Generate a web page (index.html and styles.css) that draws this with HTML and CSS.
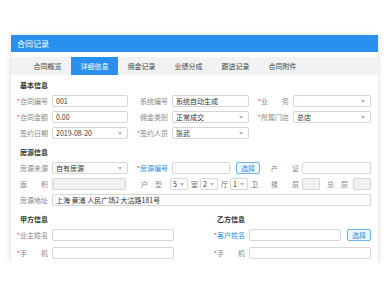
FILE: index.html
```html
<!DOCTYPE html>
<html lang="zh-CN">
<head>
  <meta charset="UTF-8" />
  <meta name="viewport" content="width=device-width, initial-scale=1.0"/>
  <title>合同记录</title>
  <link rel="stylesheet" href="styles.css">
</head>
<body>
  <div class="card">
    <div class="card-head">合同记录</div>

    <div class="tabs">
      <span class="tab">合同概览</span>
      <span class="tab active">详细信息</span>
      <span class="tab">佣金记录</span>
      <span class="tab">业绩分成</span>
      <span class="tab">跟进记录</span>
      <span class="tab">合同附件</span>
    </div>

    <div class="card-body">
      <div class="title first">基本信息</div>
      <div class="grid3">
        <div class="field"><label class="req">合同编号</label><div class="input">001</div></div>
        <div class="field"><label>系统编号</label><div class="input">系统自动生成</div></div>
        <div class="field"><label class="req">业&emsp;&emsp;务</label><div class="select"></div></div>

        <div class="field"><label class="req">合同金额</label><div class="input">0.00</div></div>
        <div class="field"><label>佣金类别</label><div class="select">正常成交</div></div>
        <div class="field"><label class="req">所属门店</label><div class="select">总店</div></div>

        <div class="field"><label>签约日期</label><div class="select">2019-08-20</div></div>
        <div class="field"><label class="req">签约人员</label><div class="select">张武</div></div>
      </div>

      <div class="title">房源信息</div>
      <div class="rows">
        <div class="row">
          <div class="field w1"><label>房源来源</label><div class="select">自有房源</div></div>
          <div class="field w2"><label class="req link">房源编号</label><div class="input"></div></div>
          <button class="btn">选择</button>
          <label class="lbl-side">产&emsp;&emsp;证</label>
          <div class="input grow"></div>
        </div>
        <div class="row">
          <div class="field w1"><label>面&emsp;&emsp;积</label><div class="input disabled"></div></div>
          <label class="lbl-hx">户&emsp;型</label>
          <div class="select mini">5</div><span class="unit">室</span>
          <div class="select mini">2</div><span class="unit">厅</span>
          <div class="select mini">1</div><span class="unit">卫</span>
          <label class="lbl-side">楼&emsp;&emsp;层</label>
          <div class="input disabled mini"></div>
          <label class="lbl-zc">总&emsp;层</label>
          <div class="input disabled mini"></div>
        </div>
        <div class="row">
          <div class="field full"><label>房源地址</label><div class="input">上海 黄浦 人民广场2 大沽路181号</div></div>
        </div>
      </div>

      <div class="grid2">
        <div class="col">
          <div class="title">甲方信息</div>
          <div class="rows loose">
            <div class="field"><label class="req">业主姓名</label><div class="input"></div></div>
            <div class="field"><label class="req">手&emsp;&emsp;机</label><div class="input"></div></div>
          </div>
        </div>
        <div class="col">
          <div class="title">乙方信息</div>
          <div class="rows loose">
            <div class="field"><label class="req link">客户姓名</label><div class="input"></div><button class="btn">选择</button></div>
            <div class="field"><label class="req">手&emsp;&emsp;机</label><div class="input"></div></div>
          </div>
        </div>
      </div>
    </div>
  </div>
</body>
</html>
```

FILE: styles.css
```css
body {
  margin: 0;
  background-color: #fff;
  font-family: "Noto Sans CJK SC", "Noto Sans", sans-serif;
  font-size: 7px;
  color: #333;
}

.card {
  width: 367px;
  margin: 35px 0 0 11px;
  background-color: #fff;
  box-shadow: 0 1px 6px rgba(0, 0, 0, 0.16);
  padding-bottom: 4px;
}

.card-head {
  height: 17px;
  line-height: 17px;
  padding-left: 6px;
  background-color: #2990f0;
  color: #fff;
  font-size: 8px;
}

.tabs {
  display: flex;
  height: 18px;
  margin-top: 5px;
  padding-left: 13px;
  background-color: #f2f2f2;
}

.tab {
  width: 47px;
  line-height: 18px;
  text-align: center;
  color: #444;
}

.tab.active {
  background-color: #2990f0;
  color: #fff;
}

.card-body {
  padding: 0 7px 0 3px;
}

.title {
  height: 16px;
  line-height: 16px;
  margin: 5px 0 2px;
  padding-left: 6px;
  font-weight: bold;
  color: #333;
}

.title.first {
  margin-top: 2px;
}

.grid3 {
  display: grid;
  grid-template-columns: 114px 115px 116px;
  column-gap: 6px;
  row-gap: 4px;
}

.grid2 {
  display: grid;
  grid-template-columns: 160px 160px;
  column-gap: 37px;
}

.rows {
  display: flex;
  flex-direction: column;
  gap: 4px;
}

.rows.loose {
  gap: 6px;
}

.row {
  display: flex;
  align-items: center;
}

.field {
  display: flex;
  align-items: center;
}

.field label {
  width: 34px;
  margin-right: 4px;
  flex-shrink: 0;
  text-align: right;
  color: #888;
  white-space: nowrap;
}

.req::before {
  content: "*";
  color: #f04848;
}

label.link {
  color: #2990f0;
}

.input,
.select {
  position: relative;
  flex: 1;
  height: 10px;
  line-height: 10px;
  padding: 0 3px;
  border: 1px solid #d6d6d6;
  border-radius: 2px;
  background-color: #fff;
  color: #333;
  white-space: nowrap;
  overflow: hidden;
}

.select::after {
  content: "";
  position: absolute;
  right: 5px;
  top: 4px;
  border-left: 2px solid transparent;
  border-right: 2px solid transparent;
  border-top: 3px solid #b5b5b5;
}

.disabled {
  background-color: #f0f0f0;
}

.w1 {
  width: 114px;
}

.w2 {
  width: 96px;
  margin-left: 6px;
}

.full {
  width: 100%;
}

.btn {
  width: 24px;
  height: 12px;
  margin-left: 6px;
  padding: 0;
  flex-shrink: 0;
  font-family: inherit;
  font-size: 7px;
  line-height: 10px;
  color: #2990f0;
  background-color: #eef6fe;
  border: 1px solid #6db3f2;
  border-radius: 2px;
}

.grow {
  flex: 1;
}

.lbl-side {
  width: 26px;
  margin: 0 5px 0 11px;
  color: #888;
  white-space: nowrap;
}

.lbl-hx {
  width: 30px;
  margin: 0 8px 0 6px;
  text-align: right;
  color: #888;
}

.lbl-zc {
  width: 21px;
  margin: 0 5px 0 7px;
  color: #888;
  white-space: nowrap;
}

.select.mini {
  flex: none;
  width: 10px;
  padding: 0 4px 0 2px;
}

.select.mini::after {
  right: 3px;
}

.input.mini {
  flex: none;
  width: 10px;
  padding: 0 3px;
}

.unit {
  margin: 0 2px 0 3px;
  color: #666;
}
```
